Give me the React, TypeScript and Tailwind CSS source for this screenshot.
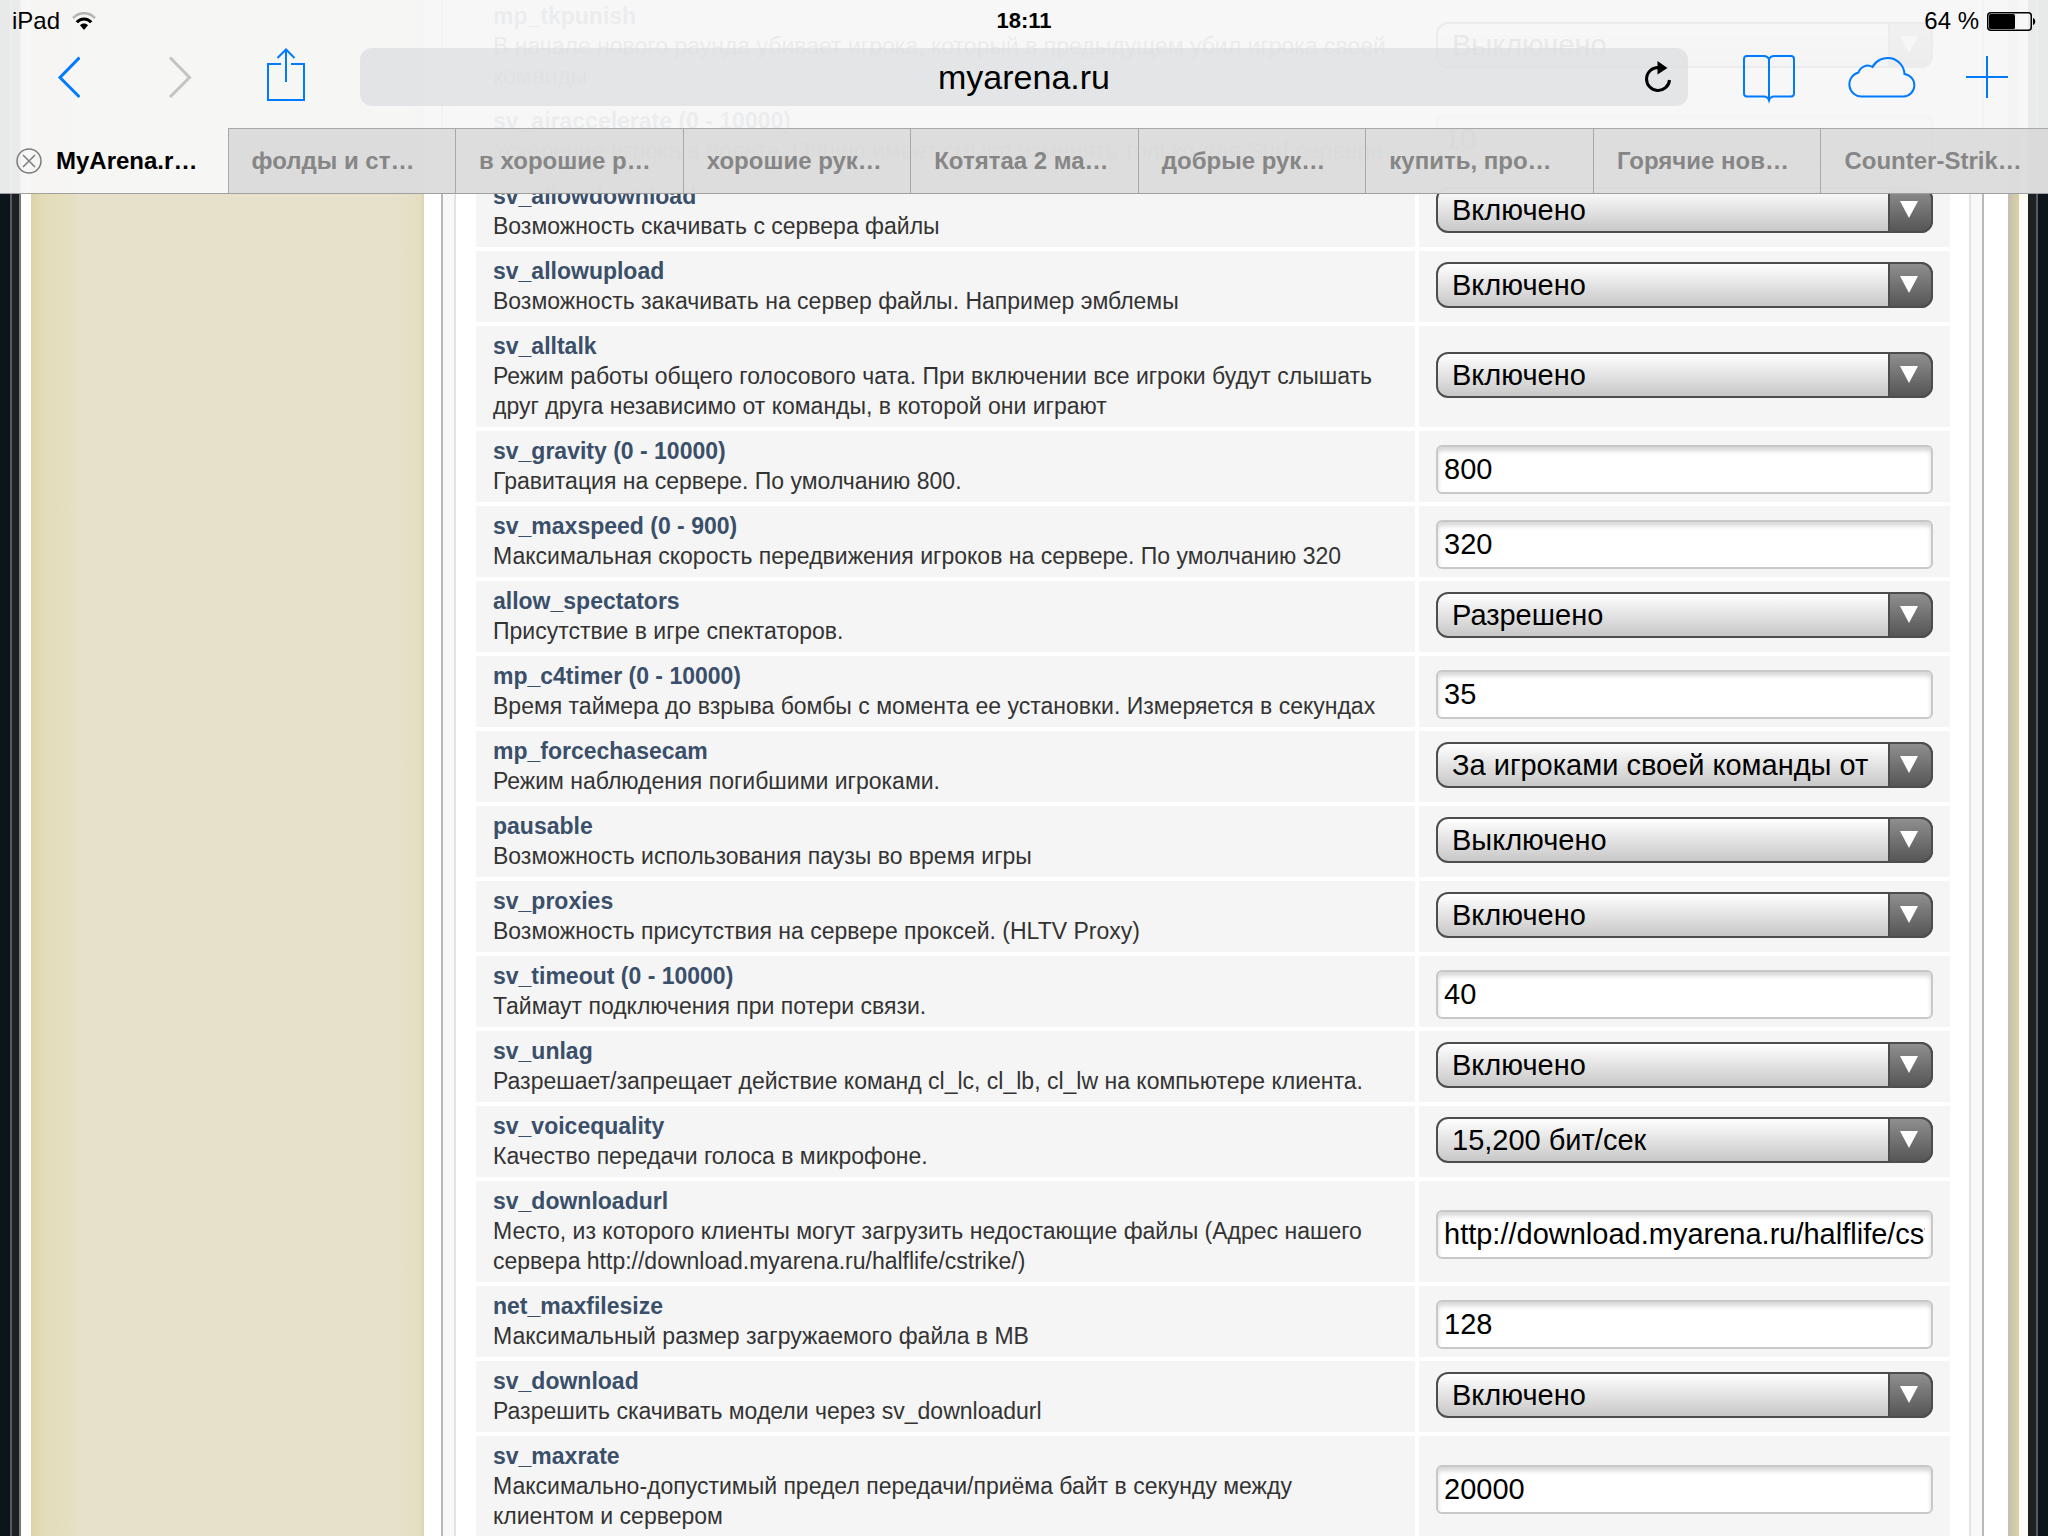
import { useId } from "react";

type Setting = {
  name: string;
  about: string;
  value: string;
  kind: "select" | "text";
};

const settings: Setting[] = [
  { name: "mp_tkpunish", about: "В начале нового раунда убивает игрока, который в предыдущем убил игрока своей команды", value: "Выключено", kind: "select" },
  { name: "sv_airaccelerate (0 - 10000)", about: "Ускорение игрока в полете. Опцию имеет смысл изменять только для Surf сервера", value: "10", kind: "text" },
  { name: "sv_allowdownload", about: "Возможность скачивать с сервера файлы", value: "Включено", kind: "select" },
  { name: "sv_allowupload", about: "Возможность закачивать на сервер файлы. Например эмблемы", value: "Включено", kind: "select" },
  { name: "sv_alltalk", about: "Режим работы общего голосового чата. При включении все игроки будут слышать друг друга независимо от команды, в которой они играют", value: "Включено", kind: "select" },
  { name: "sv_gravity (0 - 10000)", about: "Гравитация на сервере. По умолчанию 800.", value: "800", kind: "text" },
  { name: "sv_maxspeed (0 - 900)", about: "Максимальная скорость передвижения игроков на сервере. По умолчанию 320", value: "320", kind: "text" },
  { name: "allow_spectators", about: "Присутствие в игре спектаторов.", value: "Разрешено", kind: "select" },
  { name: "mp_c4timer (0 - 10000)", about: "Время таймера до взрыва бомбы с момента ее установки. Измеряется в секундах", value: "35", kind: "text" },
  { name: "mp_forcechasecam", about: "Режим наблюдения погибшими игроками.", value: "За игроками своей команды от", kind: "select" },
  { name: "pausable", about: "Возможность использования паузы во время игры", value: "Выключено", kind: "select" },
  { name: "sv_proxies", about: "Возможность присутствия на сервере проксей. (HLTV Proxy)", value: "Включено", kind: "select" },
  { name: "sv_timeout (0 - 10000)", about: "Таймаут подключения при потери связи.", value: "40", kind: "text" },
  { name: "sv_unlag", about: "Разрешает/запрещает действие команд cl_lc, cl_lb, cl_lw на компьютере клиента.", value: "Включено", kind: "select" },
  { name: "sv_voicequality", about: "Качество передачи голоса в микрофоне.", value: "15,200 бит/сек", kind: "select" },
  { name: "sv_downloadurl", about: "Место, из которого клиенты могут загрузить недостающие файлы (Адрес нашего сервера http://download.myarena.ru/halflife/cstrike/)", value: "http://download.myarena.ru/halflife/cstrike/", kind: "text" },
  { name: "net_maxfilesize", about: "Максимальный размер загружаемого файла в MB", value: "128", kind: "text" },
  { name: "sv_download", about: "Разрешить скачивать модели через sv_downloadurl", value: "Включено", kind: "select" },
  { name: "sv_maxrate", about: "Максимально-допустимый предел передачи/приёма байт в секунду между клиентом и сервером", value: "20000", kind: "text" },
];

const tabs = [
  "фолды и ст…",
  "в хорошие р…",
  "хорошие рук…",
  "Котятаа 2 ма…",
  "добрые рук…",
  "купить, про…",
  "Горячие нов…",
  "Counter-Strik…",
];

function StatusBar() {
  return (
    <div className="grid h-[42px] grid-cols-3 items-center px-3 text-2xl text-black">
      <div className="flex items-center gap-3">
        <span>iPad</span>
        <svg viewBox="0 0 24 18" className="h-[18px] w-6" fill="none" aria-label="Wi-Fi">
          <path d="M1 6.2C7-.4 17-.4 23 6.2" stroke="#b4b4b4" strokeWidth="2.6" />
          <path d="M4.8 10.2C8.6 5.8 15.4 5.8 19.2 10.2" stroke="#000" strokeWidth="3" />
          <path d="M12 18 8 13.2c2-2.2 6-2.2 8 0L12 18Z" fill="#000" />
        </svg>
      </div>
      <div className="text-center text-[22px] font-bold">18:11</div>
      <div className="flex items-center justify-end gap-2">
        <span>64 %</span>
        <svg viewBox="0 0 49 19" className="h-[19px] w-[49px]" fill="none" aria-label="Батарея">
          <rect x="0.75" y="0.75" width="43.5" height="17.5" rx="3" stroke="#000" strokeWidth="1.5" />
          <rect x="2" y="2" width="26" height="15" rx="1.5" fill="#000" />
          <path d="M46 6c3 1 3 6 0 7V6Z" fill="#000" />
        </svg>
      </div>
    </div>
  );
}

function Toolbar() {
  return (
    <div className="flex h-[86px] items-start pl-[56px] pr-10 pt-[6px]">
      <button className="mt-2 h-[42px] w-6" aria-label="Назад">
        <svg viewBox="0 0 24 42" className="size-full" fill="none">
          <path d="M23.5 1.5 4 21.5l19.5 19.500" stroke="#007aff" strokeWidth="3" />
        </svg>
      </button>
      <button className="ml-[88px] mt-2 h-[42px] w-6" aria-label="Вперёд">
        <svg viewBox="0 0 24 42" className="size-full" fill="none">
          <path d="M2 1.5 21.5 21.500 2 41" stroke="#c4c4c4" strokeWidth="3" />
        </svg>
      </button>
      <button className="ml-[74px] h-[54px] w-10" aria-label="Поделиться">
        <svg viewBox="0 0 40 54" className="size-full" fill="none" stroke="#007aff" strokeWidth="2">
          <path d="M15 16H2v36h36V16H25M20 34V2M11.5 10 20 1.5 28.5 10" />
        </svg>
      </button>
      <div className="ml-[54px] flex h-[58px] flex-1 items-center rounded-xl bg-[#dcdde0]/70 pl-11 pr-4">
        <input
          className="w-0 flex-1 bg-transparent text-center text-[34px] leading-10 text-black outline-none"
          defaultValue="myarena.ru"
          aria-label="Адрес"
        />
        <button className="h-8 w-7" aria-label="Обновить">
          <svg viewBox="0 0 28 32" className="size-full" fill="none">
            <path d="M14 6.5A11.5 11.5 0 1 0 25.5 19" stroke="#000" strokeWidth="3" />
            <path d="m13.5 0 10 7-10 6.5V0Z" fill="#000" />
          </svg>
        </button>
      </div>
      <button className="ml-[53px] mt-1 h-[52px] w-14" aria-label="Закладки">
        <svg viewBox="0 0 56 52" className="size-full" fill="none" stroke="#007aff" strokeWidth="2">
          <path d="M28 7.500c-1-2.500-2.500-3.500-5-3.500H6C4 4 3 5 3 7v34.500c0 2 1 3 3 3h17c2.500 0 4 1 5 4 1-3 2.500-4 5-4h17c2 0 3-1 3-3V7c0-2-1-3-3-3H33c-2.500 0-4 1-5 3.500Zm0 0v41" />
        </svg>
      </button>
      <button className="ml-[50px] mt-1 h-[48px] w-[70px]" aria-label="Вкладки iCloud">
        <svg viewBox="0 0 70 48" className="size-full" fill="none" stroke="#007aff" strokeWidth="2">
          <path d="M15 44.500A12.200 12.200 0 0 1 11.500 20.500 9.500 9.500 0 0 1 25.500 15 17 17 0 0 1 57.500 22 11.300 11.300 0 0 1 56.500 44.500Z" />
        </svg>
      </button>
      <button className="ml-[49px] mt-2 size-[42px]" aria-label="Новая вкладка">
        <svg viewBox="0 0 42 42" className="size-full" fill="none" stroke="#007aff" strokeWidth="2">
          <path d="M21 0v42M0 21h42" />
        </svg>
      </button>
    </div>
  );
}

function TabBar() {
  return (
    <div className="grid h-[66px] grid-cols-9 border-b border-[#a0a0a0] text-2xl font-bold">
      <div className="flex items-center gap-[14px] pl-4">
        <button className="size-[26px]" aria-label="Закрыть вкладку">
          <svg viewBox="0 0 26 26" className="size-full" fill="none" stroke="#7c7c7c" strokeWidth="1.5">
            <circle cx="13" cy="13" r="12" />
            <path d="m7 7 12 12M19 7 7 19" />
          </svg>
        </button>
        <a href="#" className="text-black">MyArena.r…</a>
      </div>
      {tabs.map((tab) => (
        <a
          key={tab}
          href="#"
          className="flex items-center whitespace-nowrap border-l border-t border-[#a9a9a9] bg-[#d6d6d6]/80 pl-[23px] text-[#868686]"
        >
          {tab}
        </a>
      ))}
    </div>
  );
}

function SettingRow({ setting }: { setting: Setting }) {
  const id = useId();

  return (
    <tr>
      <td className="bg-[#f5f5f5] pb-[6px] pl-[17px] pr-6 pt-[5px] align-top leading-[30px]">
        <label htmlFor={id} className="block font-bold text-[#3a4f6a]">
          {setting.name}
        </label>
        <p className="text-[#333]">{setting.about}</p>
      </td>
      {setting.kind === "select" ? (
        <td className="bg-[#f5f5f5] px-[17px] pb-1 align-middle">
          <div className="relative">
            <select
              id={id}
              className="block h-[46px] w-full appearance-none rounded-xl border-2 border-[#4d4d4d] bg-linear-to-b from-white to-[#c8c8c8] pl-[14px] pr-12 text-[29px] leading-10 text-black"
            >
              <option>{setting.value}</option>
            </select>
            <span className="pointer-events-none absolute inset-y-0 right-0 flex w-[45px] items-center justify-center rounded-r-xl border-2 border-[#4d4d4d] bg-linear-to-b from-[#8f8f8f] to-[#565656] pr-1">
              <svg viewBox="0 0 18 17" className="h-[17px] w-[18px]">
                <path d="M0 0h18L9 17Z" fill="#fff" />
              </svg>
            </span>
          </div>
        </td>
      ) : (
        <td className="bg-[#f5f5f5] px-[17px] pt-[6px] align-middle">
          <input
            id={id}
            type="text"
            defaultValue={setting.value}
            className="block h-[49px] w-full rounded-md border-2 border-[#c8c8c8] bg-white px-[6px] text-[29px] text-black shadow-[inset_0_4px_4px_#d8d8d8]"
          />
        </td>
      )}
    </tr>
  );
}

export default function App() {
  return (
    <div className="relative h-screen overflow-hidden bg-[#0d151c] font-['Liberation_Sans',Arial,sans-serif]">
      <header className="absolute inset-x-0 top-0 z-10 bg-[#f7f7f7]/94">
        <StatusBar />
        <Toolbar />
        <TabBar />
      </header>

      <div className="flex min-h-full px-[10px]">
        <div className="w-[11px] shrink-0 border-x-2 border-l-[#55585c] border-r-[#77797b] bg-[#1f2022]" />
        <div className="flex flex-1 bg-white pl-[10px]">
          <aside className="w-[393px] shrink-0 bg-[linear-gradient(to_right,#ddd3a8,#e2dcb9_3%,#e4dfc0_9%,#e6e1ca_13%,#e6e1ca_93%,#e4dfc0_99%,#d9d4b8)]" />
          <main className="ml-[17px] flex-1 border-x-2 border-[#b9b9b9] bg-[#f8f8f8] px-[11px]">
            <div className="border-x-2 border-[#e3e3e3] bg-white pl-4 pr-[15px]">
              <table className="-mt-2 w-full border-separate border-spacing-1 text-[23px]">
                <colgroup>
                  <col />
                  <col className="w-[531px]" />
                </colgroup>
                <tbody>
                  {settings.map((s) => (
                    <SettingRow key={s.name} setting={s} />
                  ))}
                </tbody>
              </table>
            </div>
          </main>
          <div className="ml-6 w-[11px] shrink-0 bg-linear-to-r from-[#c3beb0] to-[#dbd2a8]" />
          <div className="w-[9px] shrink-0 bg-[#fdfcf6]" />
        </div>
        <div className="w-[10px] shrink-0 border-r-2 border-[#55585c] bg-[#1f2022]" />
      </div>
    </div>
  );
}
